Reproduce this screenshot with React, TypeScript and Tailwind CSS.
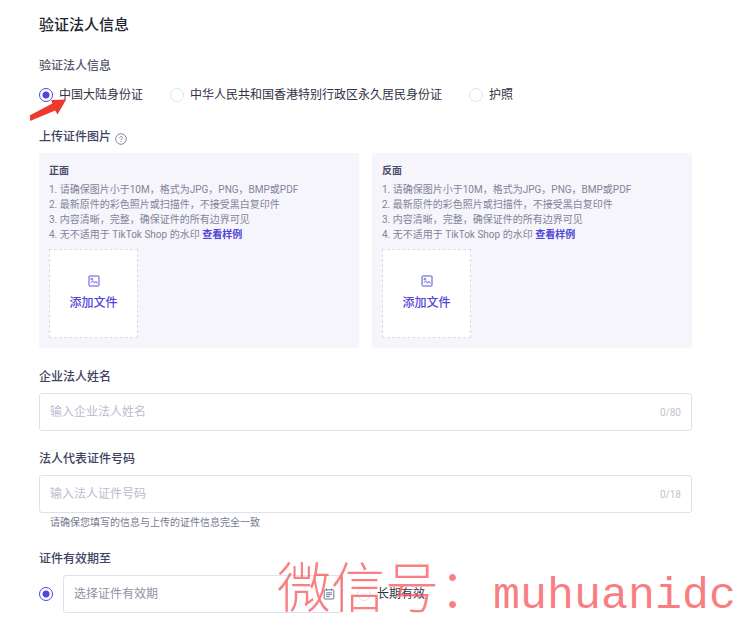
import { useState } from 'react';

const docTypes = ['中国大陆身份证', '中华人民共和国香港特别行政区永久居民身份证', '护照'];

const radioClass =
    "size-[14px] shrink-0 appearance-none rounded-full border border-[#e1e3ec] bg-white checked:border-[#5046d8] checked:bg-[radial-gradient(circle,#5046d8_3px,transparent_4px)]";

function ImageIcon() {
    return (
        <svg width="12" height="12" viewBox="0 0 12 12" fill="none" stroke="#5b50d6" strokeWidth="1" aria-hidden="true">
            <rect x="1" y="1" width="10" height="10" rx="0.6" />
            <path d="M3 3.4h1.7v1.3H3z" strokeWidth="0.7" />
            <path d="M2.8 7.6c.8-.2 1.2-1.6 2-1.5.9.1 1 1.9 1.8 1.8.6-.1.7-1.5 1.4-1.4.6.1.8 1 1.1 2" />
        </svg>
    );
}

function CalendarIcon() {
    return (
        <svg width="12" height="12" viewBox="0 0 12 12" fill="none" stroke="#5f6684" strokeWidth="0.9" aria-hidden="true">
            <rect x="1.2" y="1.8" width="9.6" height="9.2" rx="0.8" />
            <path d="M3.6 0.6v2M8.4 0.6v2M3.2 4.8h5.6M3.2 6.7h5.6M3.2 8.6h3.4" />
        </svg>
    );
}

function UploadPanel({ title }: { title: string }) {
    return (
        <section className="flex-1 bg-[#f6f5fb] p-[10px]">
            <h3 className="text-[10px] leading-[15px] font-bold text-[#4a4d68]">{title}</h3>
            <ol className="mt-1 text-[10px] leading-[15px] text-[#82849a]">
                <li>1. 请确保图片小于10M，格式为JPG，PNG，BMP或PDF</li>
                <li>2. 最新原件的彩色照片或扫描件，不接受黑白复印件</li>
                <li>3. 内容清晰，完整，确保证件的所有边界可见</li>
                <li>
                    4. 无不适用于 TikTok Shop 的水印{' '}
                    <a href="#sample" className="font-bold text-[#5046d8]">查看样例</a>
                </li>
            </ol>
            <button
                type="button"
                className="mt-[7px] flex size-[89px] flex-col items-center justify-center gap-[6px] border border-dashed border-[#dcdce9] bg-white text-xs leading-[20px] font-medium text-[#5046d8]"
            >
                <ImageIcon />
                添加文件
            </button>
        </section>
    );
}

function TextField({ id, label, placeholder, max }: { id: string; label: string; placeholder: string; max: number }) {
    const [value, setValue] = useState('');

    return (
        <div>
            <label htmlFor={id} className="block text-xs leading-[18px] font-medium text-[#40435f]">{label}</label>
            <div className="mt-[7px] flex h-[38px] items-center rounded-[3px] border border-[#dfe0ec] px-[10px]">
                <input
                    id={id}
                    type="text"
                    maxLength={max}
                    value={value}
                    onChange={(e) => setValue(e.target.value)}
                    placeholder={placeholder}
                    className="min-w-0 flex-1 bg-transparent text-xs text-[#2f3142] outline-none placeholder:text-[#b9bccf]"
                />
                <span className="text-[10px] text-[#c0c2d0]">{value.length}/{max}</span>
            </div>
        </div>
    );
}

export default function App() {
    const [docType, setDocType] = useState(docTypes[0]);
    const [validity, setValidity] = useState('date');

    return (
        <main
            lang="zh-CN"
            className="relative overflow-hidden bg-white pt-[13px] pr-[57px] pb-4 pl-[39px] font-['Roboto','Noto_Sans_CJK_SC',sans-serif] text-[#2f3142]"
        >
            <h1 className="text-[15px] leading-[24px] font-medium text-[#22242f]">验证法人信息</h1>

            <fieldset className="relative mt-5">
                <legend className="text-xs leading-[18px] font-medium text-[#55586f]">验证法人信息</legend>
                <div className="mt-[11px] flex gap-[27px]">
                    {docTypes.map((type) => (
                        <label key={type} className="flex items-center gap-[6px] text-xs leading-[18px] whitespace-nowrap">
                            <input
                                type="radio"
                                name="docType"
                                checked={docType === type}
                                onChange={() => setDocType(type)}
                                className={radioClass}
                            />
                            {type}
                        </label>
                    ))}
                </div>
                <svg
                    className="pointer-events-none absolute top-6 -left-[9px]"
                    width="37"
                    height="23"
                    viewBox="0 0 37 23"
                    aria-hidden="true"
                >
                    <path d="M0 16.2 22.3 4.6 21.2 1.1 36.2.6 27.5 15.6 25.2 11.6 0 22Z" fill="#f0392e" />
                </svg>
            </fieldset>

            <div className="mt-6 flex items-center gap-1">
                <h2 className="text-xs leading-[18px] font-medium text-[#40435f]">上传证件图片</h2>
                <svg className="mt-1" width="12" height="12" viewBox="0 0 12 12" fill="none" stroke="#777b95" strokeWidth="0.9" aria-hidden="true">
                    <circle cx="6" cy="6" r="5.3" />
                    <path d="M4.6 4.9c0-1.9 2.9-1.8 2.8-.1C7.4 5.9 6 5.8 6 7.1M6 8v.9" />
                </svg>
            </div>

            <div className="mt-[7px] flex gap-[13px]">
                <UploadPanel title="正面" />
                <UploadPanel title="反面" />
            </div>

            <div className="mt-5">
                <TextField id="name" label="企业法人姓名" placeholder="输入企业法人姓名" max={80} />
            </div>
            <div className="mt-[19px]">
                <TextField id="idNumber" label="法人代表证件号码" placeholder="输入法人证件号码" max={18} />
                <p className="mt-[2px] pl-[11px] text-[10px] leading-[15px] text-[#777990]">请确保您填写的信息与上传的证件信息完全一致</p>
            </div>

            <fieldset className="mt-5">
                <legend className="text-xs leading-[18px] font-medium text-[#40435f]">证件有效期至</legend>
                <div className="mt-[7px] flex items-center">
                    <input
                        type="radio"
                        name="validity"
                        aria-label="选择证件有效期"
                        checked={validity === 'date'}
                        onChange={() => setValidity('date')}
                        className={radioClass}
                    />
                    <div className="ml-[10px] flex h-[38px] w-[279px] items-center rounded-[3px] border border-[#dfe0ec] pr-1.5 pl-[10px]">
                        <input
                            type="text"
                            aria-label="证件有效期"
                            placeholder="选择证件有效期"
                            className="min-w-0 flex-1 bg-transparent text-xs outline-none placeholder:text-[#8f92a3]"
                        />
                        <CalendarIcon />
                    </div>
                    <label className="ml-[15px] flex items-center gap-[6px] text-xs">
                        <input
                            type="radio"
                            name="validity"
                            checked={validity === 'long'}
                            onChange={() => setValidity('long')}
                            className={radioClass}
                        />
                        长期有效
                    </label>
                </div>
            </fieldset>

            <div className="pointer-events-none absolute right-[13px] -bottom-1 flex items-baseline leading-[72px] font-light whitespace-nowrap text-[#f5555a]/75">
                <span className="font-['Noto_Sans_CJK_SC',sans-serif] text-[54px]">微信号：</span>
                <span className="font-['Liberation_Mono',monospace] text-[45px]">muhuanidc</span>
            </div>
        </main>
    );
}
